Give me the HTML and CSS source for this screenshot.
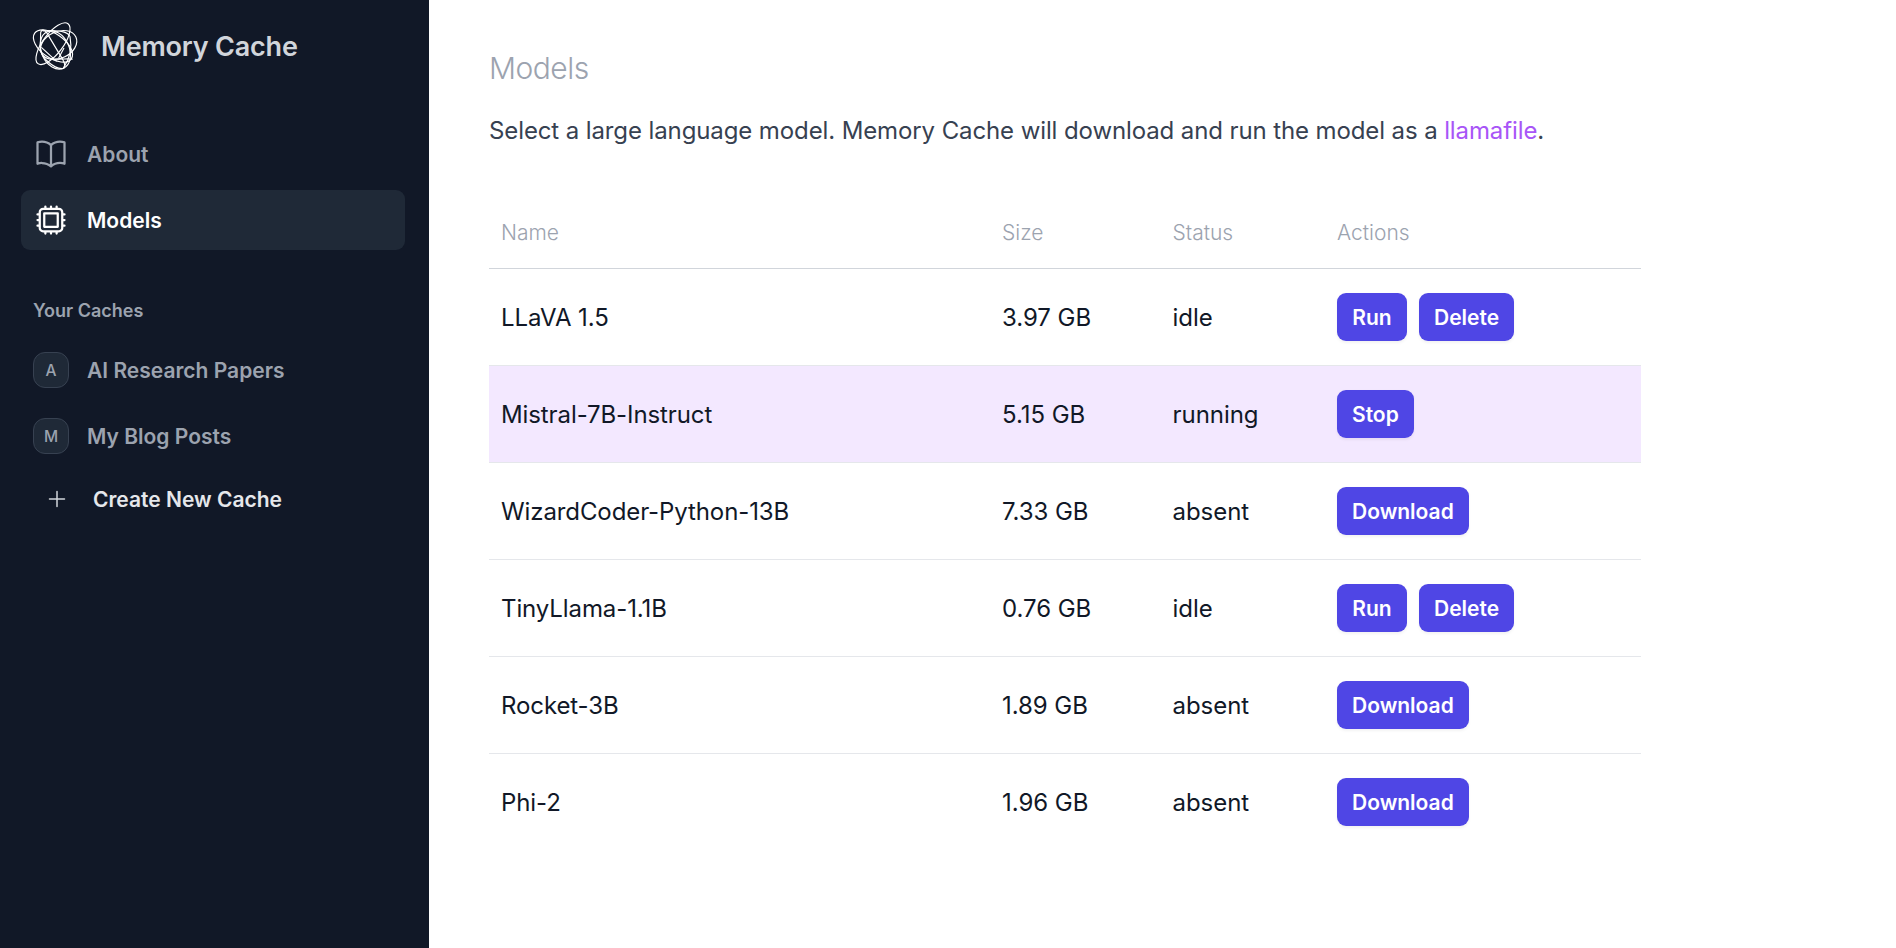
FILE: index.html
```html
<!DOCTYPE html>
<html lang="en">
<head>
<meta charset="utf-8">
<title>Memory Cache</title>
<link rel="stylesheet" href="styles.css">
</head>
<body>
<div class="app">
  <aside class="sidebar">
    <div class="brand">
      <svg class="logo" viewBox="-24 -18 210 210" fill="none" stroke="#fff" stroke-width="3.5" stroke-linejoin="round">
        <ellipse cx="75" cy="83" rx="75" ry="30" transform="rotate(-53 75 83)"/>
        <ellipse cx="92" cy="87" rx="57" ry="40" transform="rotate(-25 92 87)"/>
        <ellipse cx="75" cy="90" rx="67" ry="36" transform="rotate(35 75 90)"/>
        <ellipse cx="82" cy="102" rx="60" ry="42" transform="rotate(66 82 102)"/>
        <path d="M38 50C40 40 50 40 56 50L104 130C114 148 112 158 102 158C76 156 42 128 37 100Z"/>
        <path d="M44 45C84 42 120 46 126 62C132 92 126 128 106 156"/>
        <path d="M40 94L86 136M92 126L108 96M66 128C96 132 124 126 134 130"/>
      </svg>
      <span class="brand-name">Memory Cache</span>
    </div>
    <nav class="nav">
      <a class="nav-item">
        <svg class="nav-icon" viewBox="0 0 24 24"><path d="M12 6.042A8.967 8.967 0 0 0 6 3.75c-1.052 0-2.062.18-3 .512v14.25A8.987 8.987 0 0 1 6 18c2.305 0 4.408.867 6 2.292m0-14.25a8.966 8.966 0 0 1 6-2.292c1.052 0 2.062.18 3 .512v14.25A8.987 8.987 0 0 0 18 18a8.967 8.967 0 0 0-6 2.292m0-14.25v14.25"/></svg>
        <span class="label">About</span>
      </a>
      <a class="nav-item active">
        <svg class="nav-icon" viewBox="0 0 24 24"><path d="M8.25 3v1.5M4.5 8.25H3m18 0h-1.5M4.5 12H3m18 0h-1.5m-15 3.75H3m18 0h-1.5M8.25 19.5V21M12 3v1.5m0 15V21m3.75-18v1.5m0 15V21m-9-1.5h10.5a2.25 2.25 0 0 0 2.25-2.25V6.75a2.25 2.25 0 0 0-2.25-2.25H6.75A2.25 2.25 0 0 0 4.5 6.75v10.5a2.25 2.25 0 0 0 2.25 2.25Zm.75-12h9v9h-9v-9Z"/></svg>
        <span class="label">Models</span>
      </a>
    </nav>
    <div class="caches-title">Your Caches</div>
    <div class="nav caches">
      <a class="nav-item"><span class="initial">A</span><span class="label">AI Research Papers</span></a>
      <a class="nav-item"><span class="initial">M</span><span class="label">My Blog Posts</span></a>
    </div>
    <button class="create">
      <svg class="plus" viewBox="0 0 24 24"><path d="M12 4.5v15m7.5-7.5h-15"/></svg>
      <span class="label">Create New Cache</span>
    </button>
  </aside>
  <main class="main">
    <h1 class="title">Models</h1>
    <p class="intro">Select a large language model. Memory Cache will download and run the model as a <a class="link">llamafile</a>.</p>
    <table class="models">
      <colgroup><col class="col-name"><col class="col-size"><col class="col-status"><col></colgroup>
      <thead><tr><th>Name</th><th>Size</th><th>Status</th><th>Actions</th></tr></thead>
      <tbody>
        <tr><td>LLaVA 1.5</td><td>3.97 GB</td><td>idle</td><td><div class="actions"><button class="btn">Run</button><button class="btn">Delete</button></div></td></tr>
        <tr class="running"><td>Mistral-7B-Instruct</td><td>5.15 GB</td><td>running</td><td><div class="actions"><button class="btn">Stop</button></div></td></tr>
        <tr><td>WizardCoder-Python-13B</td><td>7.33 GB</td><td>absent</td><td><div class="actions"><button class="btn">Download</button></div></td></tr>
        <tr><td>TinyLlama-1.1B</td><td>0.76 GB</td><td>idle</td><td><div class="actions"><button class="btn">Run</button><button class="btn">Delete</button></div></td></tr>
        <tr><td>Rocket-3B</td><td>1.89 GB</td><td>absent</td><td><div class="actions"><button class="btn">Download</button></div></td></tr>
        <tr><td>Phi-2</td><td>1.96 GB</td><td>absent</td><td><div class="actions"><button class="btn">Download</button></div></td></tr>
      </tbody>
    </table>
  </main>
</div>
</body>
</html>
```

FILE: styles.css
```css
* { box-sizing: border-box; }
body {
  margin: 0;
  background: #fff;
  color: #111827;
  font-family: Inter, "Liberation Sans", sans-serif;
  font-size: 24px;
  line-height: 36px;
}
button { font: inherit; border: 0; background: none; padding: 0; color: inherit; }
.app { display: flex; height: 948px; overflow: hidden; }

.sidebar {
  width: 429px;
  flex: none;
  padding: 11px 24px 0 21px;
  background: #111827;
}
.brand { display: flex; align-items: center; height: 70px; }
.logo { width: 70px; height: 70px; flex: none; margin: -2px 0 0 -1px; }
.brand-name { margin-left: 11px; padding-top: 2px; font-size: 27px; font-weight: 600; letter-spacing: -0.2px; color: #d1d5db; }
.nav { display: flex; flex-direction: column; gap: 6px; margin-top: 43px; }
.nav-item {
  display: flex;
  align-items: center;
  gap: 18px;
  height: 60px;
  padding: 12px;
  border-radius: 9px;
  font-size: 21px;
  font-weight: 600;
  color: #9ca3af;
}
.label { padding-top: 2px; }
.nav-item.active { background: #1f2937; color: #fff; }
.nav-icon, .plus { fill: none; stroke: currentColor; stroke-width: 1.5; stroke-linecap: round; stroke-linejoin: round; }
.nav-icon { width: 36px; height: 36px; }
.caches-title { margin: 49px 12px 0; font-size: 18px; line-height: 24px; font-weight: 600; color: #9ca3af; }
.nav.caches { margin-top: 17px; }
.initial {
  display: flex;
  align-items: center;
  justify-content: center;
  width: 36px;
  height: 36px;
  padding-top: 1px;
  border: 1px solid #374151;
  border-radius: 12px;
  background: #1f2937;
  font-size: 15.5px;
  font-weight: 500;
}
.create { display: flex; align-items: center; gap: 24px; margin: 14px 0 0 24px; font-size: 21px; font-weight: 600; color: #e5e7eb; }
.plus { width: 24px; height: 24px; color: #d1d5db; }

.main { padding: 47px 0 0 60px; }
.title { margin: 0; font-size: 30px; line-height: 42px; font-weight: 300; letter-spacing: -0.5px; color: #9ca3af; }
.intro { margin: 24px 0 47px; color: #374151; letter-spacing: -0.108px; }
.link { color: #a855f7; }

.models { width: 1152px; table-layout: fixed; border-collapse: separate; border-spacing: 0; }
.col-name { width: 501px; }
.col-size { width: 170.5px; }
.col-status { width: 164.5px; }
.models th {
  height: 73px;
  padding: 22px 12px 20px;
  border-bottom: 1px solid #d1d5db;
  font-size: 21px;
  line-height: 30px;
  font-weight: 300;
  text-align: left;
  color: #9ca3af;
}
.models td { height: 97px; padding: 26px 12px 24px; border-bottom: 1px solid #e5e7eb; letter-spacing: -0.05px; }
.models td:first-child { letter-spacing: -0.1px; }
.models td:last-child { padding: 24px 12px; letter-spacing: 0; }
.models tbody tr:last-child td { border-bottom-color: transparent; }
.running { background: #f3e8ff; }
.actions { display: flex; gap: 12px; }
.btn {
  height: 48px;
  min-width: 70px;
  padding: 10px 15px 8px;
  border-radius: 9px;
  background: #4f46e5;
  color: #fff;
  font-size: 21px;
  line-height: 30px;
  font-weight: 600;
  box-shadow: 0 1.5px 3px rgba(0, 0, 0, 0.05);
}
```
